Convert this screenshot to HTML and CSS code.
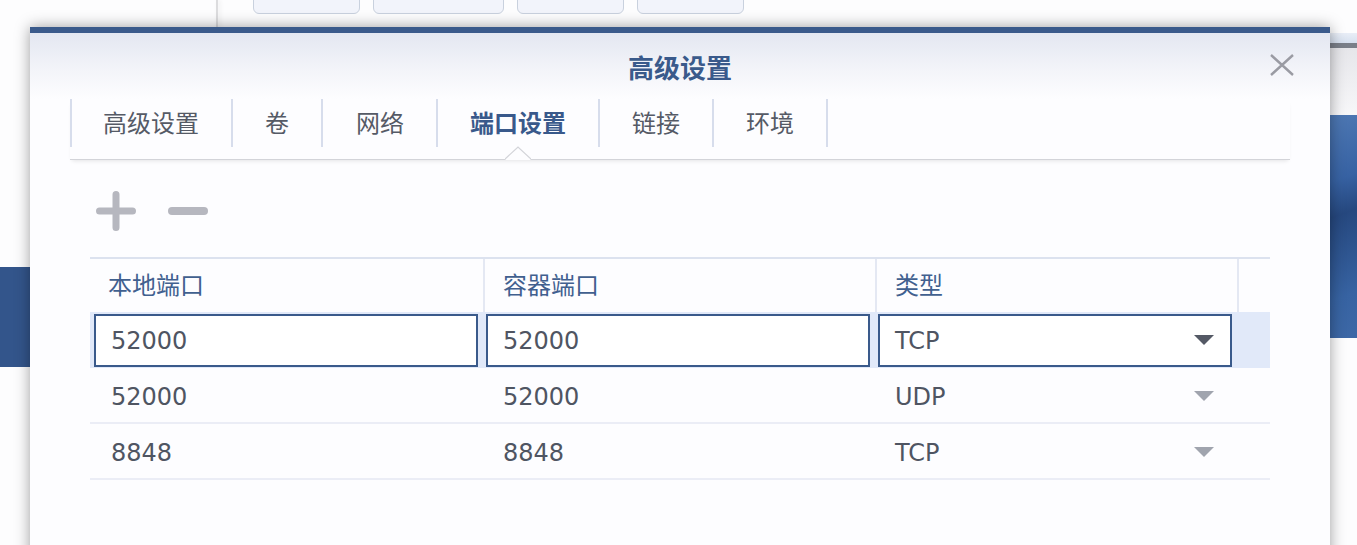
FILE: index.html
```html
<!DOCTYPE html>
<html lang="zh-CN">
<head>
  <meta charset="UTF-8">
  <title>高级设置</title>
  <link rel="stylesheet" href="styles.css">
</head>
<body>
<div class="desk">
  <div class="bg-edge"></div>
  <div class="bg-buttons">
    <span class="bg-btn w1"></span>
    <span class="bg-btn w2"></span>
    <span class="bg-btn w1"></span>
    <span class="bg-btn w1"></span>
  </div>
  <div class="bg-right">
    <div class="br-title"></div>
    <div class="br-bar"></div>
    <div class="br-fade"></div>
    <div class="br-blue"></div>
  </div>
  <div class="bg-left-blue"></div>

  <div class="dialog">
    <div class="dlg-head">
      <span class="dlg-title">高级设置</span>
      <span class="dlg-close">
        <svg width="24" height="22" viewBox="0 0 24 22"><path d="M1 1 L23 21 M23 1 L1 21" stroke="#9a9ba3" stroke-width="2.4" fill="none"/></svg>
      </span>
    </div>

    <div class="tabs">
      <div class="tab">高级设置</div>
      <div class="tab">卷</div>
      <div class="tab wide">网络</div>
      <div class="tab active">端口设置
        <svg class="notch" width="26" height="14" viewBox="0 0 26 14"><polygon points="0,14 13,1 26,14" fill="#fdfdff"/><polyline points="0,13 13,1 26,13" fill="none" stroke="#d3d4d9" stroke-width="1.2"/></svg>
      </div>
      <div class="tab">链接</div>
      <div class="tab">环境</div>
    </div>

    <div class="dlg-body">
      <div class="toolbar">
        <svg width="40" height="40" viewBox="0 0 40 40"><path d="M20 3.5 V36.5 M3.5 20 H36.5" stroke="#b6b7bf" stroke-width="7" stroke-linecap="round"/></svg>
        <svg width="40" height="40" viewBox="0 0 40 40"><path d="M4 20 H36" stroke="#b6b7bf" stroke-width="8" stroke-linecap="round"/></svg>
      </div>

      <div class="grid">
        <div class="row head">
          <div class="cell">本地端口</div>
          <div class="cell">容器端口</div>
          <div class="cell">类型</div>
          <div class="cell"></div>
        </div>
        <div class="row sel">
          <div class="cell c1"><div class="field">52000</div></div>
          <div class="cell"><div class="field">52000</div></div>
          <div class="cell"><div class="field drop">TCP<span class="caret"></span></div></div>
          <div class="cell"></div>
        </div>
        <div class="row">
          <div class="cell c1"><div class="field">52000</div></div>
          <div class="cell"><div class="field">52000</div></div>
          <div class="cell"><div class="field drop">UDP<span class="caret"></span></div></div>
          <div class="cell"></div>
        </div>
        <div class="row">
          <div class="cell c1"><div class="field">8848</div></div>
          <div class="cell"><div class="field">8848</div></div>
          <div class="cell"><div class="field drop">TCP<span class="caret"></span></div></div>
          <div class="cell"></div>
        </div>
      </div>
    </div>
  </div>
</div>
</body>
</html>
```

FILE: styles.css
```css
body {margin: 0; background: #fdfdfe; font-family: "DejaVu Sans", "Noto Sans CJK SC", sans-serif;}
.desk {position: relative; width: 1357px; height: 545px; overflow: hidden; background: #fdfdfe;}

/* windows behind the dialog */
.bg-edge {position: absolute; left: 216px; top: 0; width: 2px; height: 30px; background: #dcdcde; box-shadow: 2px 0 4px rgba(0,0,0,.08);}
.bg-buttons {position: absolute; left: 253px; top: -12px; display: flex; gap: 13px;}
.bg-btn {display: block; height: 26px; border: 1.5px solid #c9d1de; border-radius: 6px; background: #f2f4fb; box-sizing: border-box;}
.bg-btn.w1 {width: 107px;}
.bg-btn.w2 {width: 131px;}
.bg-right {position: absolute; left: 1320px; top: 33px; width: 40px; display: flex; flex-direction: column;}
.br-title {height: 10px; background: linear-gradient(#e9eef7, #d6e0ef);}
.br-bar {height: 5px; background: #7a7f89;}
.br-fade {height: 67px; background: linear-gradient(#e6e6ea, #f7f7f9);}
.br-blue {height: 223px; background: linear-gradient(160deg, #4f79b4 0%, #3762a3 30%, #26487f 45%, #3763a2 80%, #3d68a6 100%);}
.bg-left-blue {position: absolute; left: 0; top: 267px; width: 40px; height: 100px; background: #33558b;}

/* dialog */
.dialog {position: absolute; left: 30px; top: 27px; width: 1300px; height: 560px; box-sizing: border-box; border-top: 6px solid #3a5a8b; background: #fdfdff; box-shadow: 0 0 14px rgba(0,0,0,.38);}
.dlg-head {position: relative; height: 66px; display: flex; justify-content: center; align-items: center; background: linear-gradient(#e3e7f1, #f3f4f9 55%, #fdfdff);}
.dlg-title {font-size: 26px; font-weight: bold; color: #3a5a8b;}
.dlg-close {position: absolute; right: 36px; top: 21px; display: flex;}

.tabs {position: relative; margin: 0 40px; height: 60px; display: flex; align-items: flex-start; border-bottom: 1px solid #d3d4d9; box-shadow: 0 3px 4px -2px rgba(0,0,0,.1);}
.tab {position: relative; height: 48px; padding: 0 32px 3px; box-sizing: border-box; display: flex; align-items: center; border-left: 2px solid #d7ddec; font-size: 24px; color: #555a66;}
.tab:first-child {padding-left: 31px;}
.tab.wide {padding-left: 33px;}
.tab:last-child {border-right: 2px solid #d7ddec;}
.tab.active {color: #39598b; font-weight: bold;}
.notch {position: absolute; left: 50%; top: 47px; margin-left: -13px;}

.dlg-body {padding: 0 60px;}
.toolbar {display: flex; gap: 32px; padding: 31px 0 26px 6px;}

/* port table */
.grid {border-top: 2px solid #dce2ef;}
.row {display: grid; grid-template-columns: 393px 392px 362px 33px; height: 56px; border-bottom: 2px solid #ebedf6; box-sizing: border-box;}
.row.head {height: 53px; border-bottom: none;}
.row.sel {background: #e1e9f9; border-bottom: none;}
.cell {display: flex; align-items: center; min-width: 0;}
.head .cell {padding: 0 0 5px 18px; font-size: 24px; color: #41608f;}
.head .cell + .cell {border-left: 2px solid #e4e8f3;}

.field {flex: 1; display: flex; align-items: center; justify-content: space-between; height: 53px; margin: 0 5px 0 3px; padding: 0 16px 0 15px; box-sizing: border-box; border: 2px solid transparent; font-size: 24px; color: #4f5562;}
.c1 .field {margin-left: 4px;}
.row:not(.sel) .field {height: 54px; padding-top: 4px;}
.row:not(.sel) .caret {margin-top: -2px;}
.sel .field {background: #fff; border-color: #3a5a8b; padding-top: 2px;}
.caret {width: 0; height: 0; border-left: 10px solid transparent; border-right: 10px solid transparent; border-top: 10px solid #a0a4ae;}
.sel .caret {border-top-color: #545965; margin-top: -2px;}
```
